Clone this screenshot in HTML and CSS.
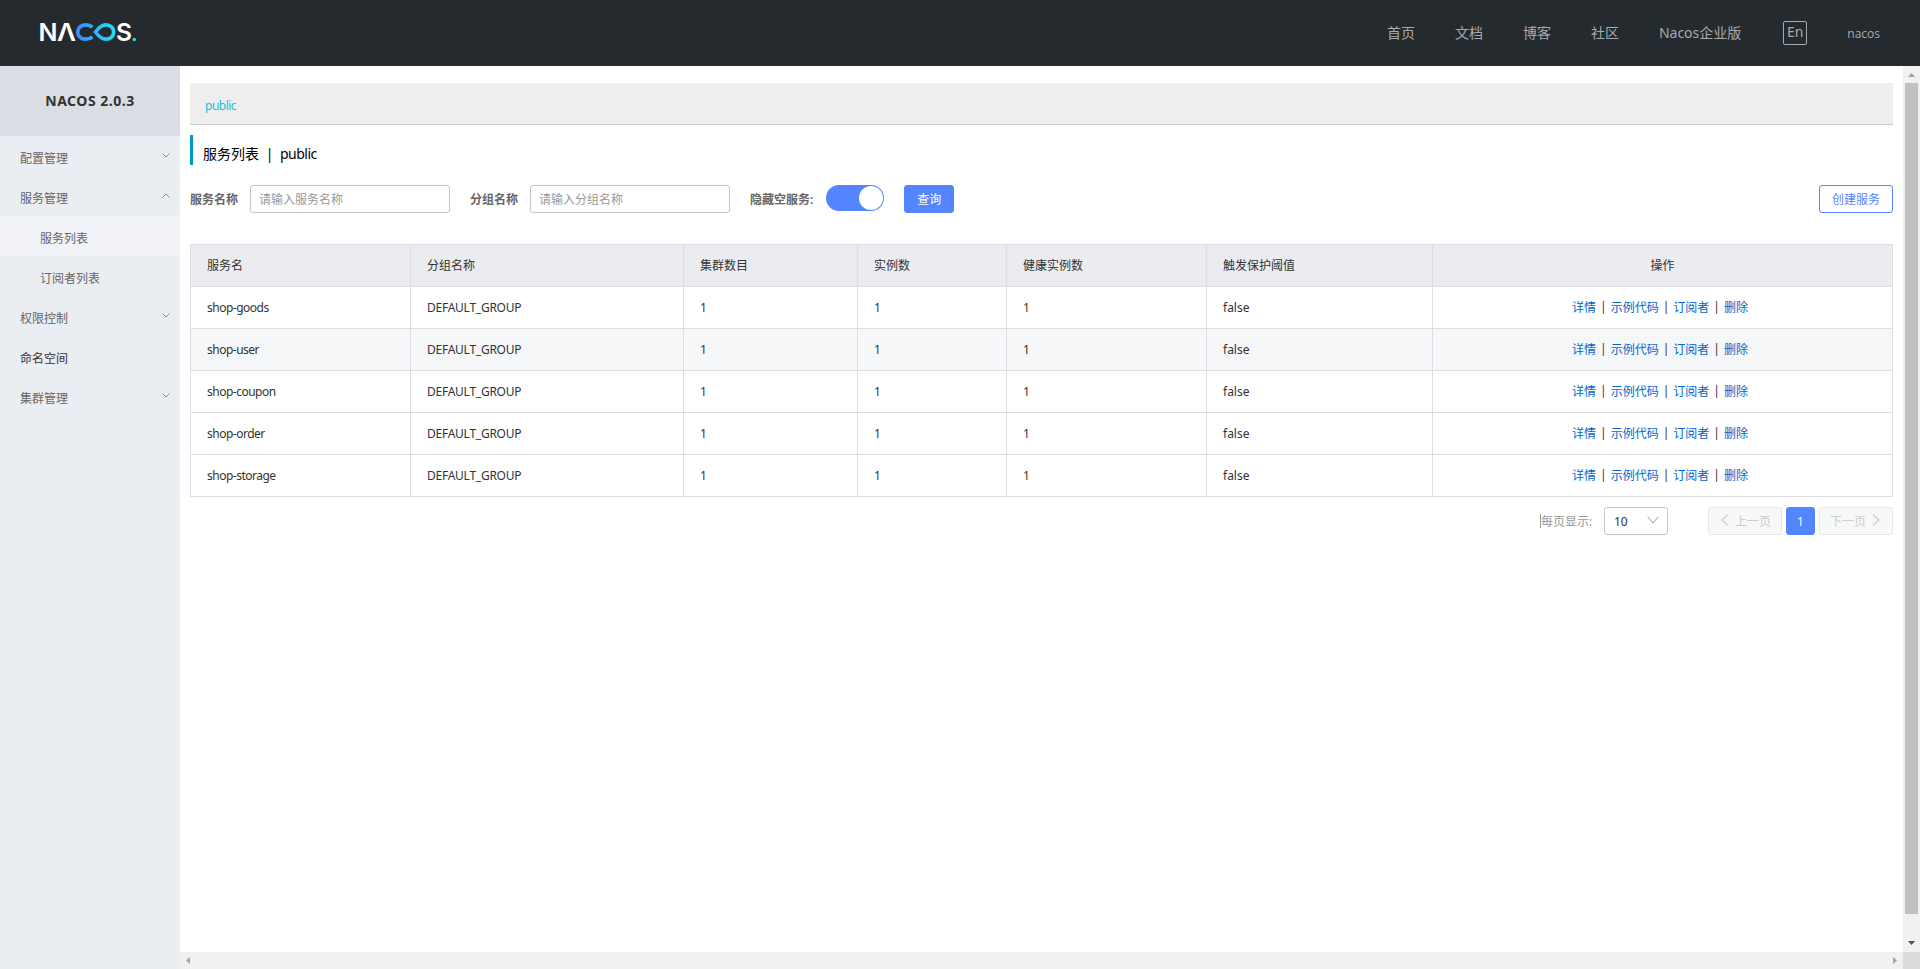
FILE: index.html
```
<!DOCTYPE html>
<html lang="zh-CN">
<head>
  <meta charset="UTF-8">
  <meta name="viewport" content="width=device-width, initial-scale=1.0">
  <title>Nacos</title>
  <link rel="stylesheet" href="styles.css">
</head>
<body>

  <header class="header">
    <a class="logo" href="#">
      <svg width="108" height="44" viewBox="-4 -10 108 44">
        <defs>
          <linearGradient id="loop" gradientUnits="userSpaceOnUse" x1="36" y1="0" x2="76" y2="0">
            <stop offset="0" stop-color="#3f86ff"/>
            <stop offset="1" stop-color="#1be3f5"/>
          </linearGradient>
        </defs>
        <text class="logo-text" x="-1.500" y="21" textLength="19" lengthAdjust="spacingAndGlyphs">N</text>
        <text class="logo-text" x="17" y="21" textLength="19" lengthAdjust="spacingAndGlyphs">Λ</text>
        <path d="M52.500 7.200C50.500 5.500 48.300 4.800 45.500 4.800C41 4.800 37.700 8 37.700 12S41 19.200 45.500 19.200C48.300 19.200 50.500 18.500 52.500 16.800M55.500 12C58 8.500 61.500 4.800 66 4.800C70.500 4.800 73.700 8 73.700 12S70.500 19.200 66 19.200C61.500 19.200 58 15.500 55.500 12Z" fill="none" stroke="url(#loop)" stroke-width="3.700"/>
        <text class="logo-text" x="76" y="21" textLength="16" lengthAdjust="spacingAndGlyphs">S</text>
        <circle cx="94.300" cy="19.500" r="1.700" fill="#1be3f5"/>
      </svg>
    </a>
    <nav class="nav">
      <a href="#">首页</a>
      <a href="#">文档</a>
      <a href="#">博客</a>
      <a href="#">社区</a>
      <a href="#" class="enterprise">Nacos企业版</a>
      <span class="lang">En</span>
      <span class="user">nacos</span>
    </nav>
  </header>

  <div class="layout">
    <aside class="sidebar">
      <h1 class="version">NACOS 2.0.3</h1>
      <ul class="menu">
        <li>配置管理<svg class="arrow" viewBox="0 0 8 5"><path d="M0.500 0.500L4 4L7.500 0.500"/></svg></li>
        <li>服务管理<svg class="arrow" viewBox="0 0 8 5"><path d="M0.500 4.500L4 1L7.500 4.500"/></svg></li>
        <li class="sub active">服务列表</li>
        <li class="sub">订阅者列表</li>
        <li>权限控制<svg class="arrow" viewBox="0 0 8 5"><path d="M0.500 0.500L4 4L7.500 0.500"/></svg></li>
        <li class="single">命名空间</li>
        <li>集群管理<svg class="arrow" viewBox="0 0 8 5"><path d="M0.500 0.500L4 4L7.500 0.500"/></svg></li>
      </ul>
    </aside>

    <main class="main">
      <div class="namespace"><a href="#">public</a></div>
      <h2 class="title"><span>服务列表</span><span class="bar">|</span><span class="ns">public</span></h2>

      <form class="search">
        <label>服务名称</label>
        <input type="text" placeholder="请输入服务名称">
        <label>分组名称</label>
        <input type="text" placeholder="请输入分组名称">
        <label class="hide-empty">隐藏空服务:</label>
        <span class="switch"></span>
        <button type="button" class="btn primary">查询</button>
        <button type="button" class="btn create">创建服务</button>
      </form>

      <table class="services">
        <colgroup>
          <col class="c-name"><col class="c-group"><col class="c-cluster"><col class="c-ip"><col class="c-healthy"><col class="c-flag"><col>
        </colgroup>
        <thead>
          <tr><th>服务名</th><th>分组名称</th><th>集群数目</th><th>实例数</th><th>健康实例数</th><th>触发保护阈值</th><th class="ops">操作</th></tr>
        </thead>
        <tbody>
          <tr><td>shop-goods</td><td>DEFAULT_GROUP</td><td>1</td><td>1</td><td>1</td><td>false</td>
            <td class="ops"><div class="links"><a href="#">详情</a><i>|</i><a href="#">示例代码</a><i>|</i><a href="#">订阅者</a><i>|</i><a href="#">删除</a></div></td></tr>
          <tr class="hovered"><td>shop-user</td><td>DEFAULT_GROUP</td><td>1</td><td>1</td><td>1</td><td>false</td>
            <td class="ops"><div class="links"><a href="#">详情</a><i>|</i><a href="#">示例代码</a><i>|</i><a href="#">订阅者</a><i>|</i><a href="#">删除</a></div></td></tr>
          <tr><td>shop-coupon</td><td>DEFAULT_GROUP</td><td>1</td><td>1</td><td>1</td><td>false</td>
            <td class="ops"><div class="links"><a href="#">详情</a><i>|</i><a href="#">示例代码</a><i>|</i><a href="#">订阅者</a><i>|</i><a href="#">删除</a></div></td></tr>
          <tr><td>shop-order</td><td>DEFAULT_GROUP</td><td>1</td><td>1</td><td>1</td><td>false</td>
            <td class="ops"><div class="links"><a href="#">详情</a><i>|</i><a href="#">示例代码</a><i>|</i><a href="#">订阅者</a><i>|</i><a href="#">删除</a></div></td></tr>
          <tr><td>shop-storage</td><td>DEFAULT_GROUP</td><td>1</td><td>1</td><td>1</td><td>false</td>
            <td class="ops"><div class="links"><a href="#">详情</a><i>|</i><a href="#">示例代码</a><i>|</i><a href="#">订阅者</a><i>|</i><a href="#">删除</a></div></td></tr>
        </tbody>
      </table>

      <div class="pagination">
        <span class="size-label">每页显示:</span>
        <div class="select">10<svg width="12" height="8" viewBox="0 0 12 8"><path d="M0.700 0.700L6 7L11.300 0.700"/></svg></div>
        <button type="button" class="page disabled prev"><svg width="8" height="12" viewBox="0 0 8 12"><path d="M7 0.700L1 6L7 11.300"/></svg>上一页</button>
        <button type="button" class="page current">1</button>
        <button type="button" class="page disabled next">下一页<svg width="8" height="12" viewBox="0 0 8 12"><path d="M1 0.700L7 6L1 11.300"/></svg></button>
      </div>
    </main>

    <div class="scroll-y">
      <svg class="end" viewBox="0 0 17 17"><path d="M5 11L8.500 7L12 11Z" fill="#a3a3a3"/></svg>
      <div class="thumb"></div>
      <svg class="end bottom" viewBox="0 0 17 17"><path d="M5 6L12 6L8.500 10Z" fill="#505050"/></svg>
    </div>
    <div class="scroll-x">
      <svg class="end" viewBox="0 0 17 17"><path d="M10 5L6 8.500L10 12Z" fill="#a3a3a3"/></svg>
      <svg class="end" viewBox="0 0 17 17"><path d="M7 5L11 8.500L7 12Z" fill="#a3a3a3"/></svg>
    </div>
    <div class="corner"></div>
  </div>

</body>
</html>
```
FILE: styles.css
```
* {
  box-sizing: border-box;
}
body {
  margin: 0;
  height: 100vh;
  overflow: hidden;
  display: flex;
  flex-direction: column;
  font-family: "Noto Sans", "Noto Sans CJK SC", sans-serif;
  font-size: 12px;
  color: #333;
  background: #fff;
}
a {
  text-decoration: none;
}
.header {
  height: 66px;
  flex: none;
  display: flex;
  align-items: center;
  justify-content: space-between;
  padding: 0 40px 0 36px;
  background: #252a2f;
}
.logo {
  display: flex;
  margin-top: -2px;
}
.logo-text {
  font-family: Inter, sans-serif;
  font-size: 24.500px;
  font-weight: 600;
  fill: #fff;
}
.nav {
  display: flex;
  align-items: center;
  gap: 40px;
  font-size: 14px;
  color: #a7aaac;
}
.nav a {
  margin-top: -2px;
  color: #a7aaac;
}
.nav .enterprise {
  margin-right: 2px;
}
.lang {
  width: 24px;
  height: 24px;
  line-height: 20px;
  border: 1px solid #a7aaac;
  border-radius: 2px;
  text-align: center;
}
.user {
  font-family: "Open Sans", sans-serif;
  font-size: 12px;
}
.layout {
  flex: 1;
  min-height: 0;
  display: grid;
  grid-template-columns: 180px 1fr 17px;
  grid-template-rows: 1fr 17px;
}
.sidebar {
  grid-row: 1 / 3;
  background: #eaedf1;
}
.version {
  margin: 0;
  height: 70px;
  line-height: 70px;
  text-align: center;
  font-family: "Noto Sans", sans-serif;
  font-size: 14px;
  font-weight: 700;
  letter-spacing: 0.5px;
  background: #d9dde4;
}
.menu {
  margin: 0;
  padding: 0;
  list-style: none;
}
.menu li {
  height: 40px;
  padding: 4px 10px 0 20px;
  display: flex;
  align-items: center;
  justify-content: space-between;
  color: #666;
}
.menu .sub {
  padding-left: 40px;
}
.menu .active {
  background: #f1f3f8;
}
.menu .single {
  color: #333;
}
.arrow {
  width: 8px;
  height: 5px;
  margin-top: -5px;
  fill: none;
  stroke: #888;
}
.main {
  padding: 17px 10px 0;
  min-width: 0;
}
.namespace {
  height: 42px;
  padding-left: 15px;
  line-height: 46px;
  letter-spacing: -0.5px;
  background: #eee;
  border-bottom: 1px solid #ccc;
}
.namespace a {
  color: #1abddc;
}
.title {
  display: flex;
  height: 30px;
  margin: 10px 0 20px;
  padding-left: 10px;
  line-height: 38px;
  border-left: 3px solid #09c;
  font-size: 14px;
  font-weight: 400;
  color: #000;
}
.title .bar {
  width: 21px;
  text-align: center;
}
.title .ns {
  letter-spacing: -0.5px;
}
.search {
  display: flex;
  align-items: center;
  height: 28px;
}
.search label {
  font-weight: 600;
  color: #666;
  margin-right: 12px;
}
.search .hide-empty {
  margin-right: 13px;
}
.search input {
  width: 200px;
  height: 28px;
  margin: 0 20px 0 0;
  padding: 0 8px;
  border: 1px solid #c4c6cf;
  border-radius: 3px;
  font: inherit;
}
.search input::placeholder {
  color: #999;
}
.switch {
  width: 58px;
  height: 26px;
  margin: 0 20px 2px 0;
  padding: 1px;
  border-radius: 13px;
  background: #5584ff;
}
.switch::after {
  content: "";
  display: block;
  width: 24px;
  height: 24px;
  margin-left: auto;
  border-radius: 50%;
  background: #fff;
}
.btn {
  height: 28px;
  padding: 0 12px;
  border: 1px solid #5584ff;
  border-radius: 3px;
  font: inherit;
}
.primary {
  width: 50px;
  background: #5584ff;
  color: #fff;
}
.create {
  width: 74px;
  margin-left: auto;
  background: #fff;
  color: #5584ff;
}
.services {
  width: 1703px;
  margin-top: 31px;
  table-layout: fixed;
  border-collapse: collapse;
}
.services tr {
  height: 42px;
}
.services th,
.services td {
  padding: 0 16px 1px;
  border: 1px solid #dcdee3;
  text-align: left;
  font-weight: 400;
}
.services td:nth-child(1) {
  letter-spacing: -0.5px;
}
.services td:nth-child(2) {
  letter-spacing: -0.25px;
}
.services th {
  background: #ebecf0;
}
.services tbody tr:hover,
.services .hovered {
  background: #f6f7f9;
}
.services .ops {
  text-align: center;
}
.c-name { width: 220px; }
.c-group { width: 273px; }
.c-cluster { width: 174px; }
.c-ip { width: 149px; }
.c-healthy { width: 200px; }
.c-flag { width: 226px; }
.links {
  display: flex;
  justify-content: center;
  padding-right: 5px;
}
.links a {
  color: #06c;
}
.links i {
  width: 14.600px;
  font-style: normal;
  text-align: center;
}
.pagination {
  display: flex;
  justify-content: flex-end;
  align-items: center;
  margin-top: 10px;
}
.size-label {
  height: 14px;
  line-height: 15px;
  margin-right: 10px;
  border-left: 1px solid #999;
  color: #999;
  width: 54px;
  white-space: nowrap;
}
.select {
  display: flex;
  align-items: center;
  justify-content: space-between;
  width: 64px;
  height: 28px;
  margin-right: 40px;
  padding: 0 8px 0 9px;
  border: 1px solid #c4c6cf;
  border-radius: 3px;
}
.select svg {
  margin-top: -2px;
  fill: none;
  stroke: #999;
}
.page {
  display: flex;
  align-items: center;
  justify-content: center;
  gap: 6px;
  height: 28px;
  padding: 0;
  border: 1px solid #e6e7eb;
  border-radius: 3px;
  font: inherit;
}
.page svg {
  margin-top: -2px;
  fill: none;
  stroke: #ccc;
  stroke-width: 1.200;
}
.disabled {
  width: 74px;
  background: #f7f8fa;
  color: #ccc;
}
.prev {
  padding-left: 2px;
}
.next {
  padding-right: 2px;
}
.current {
  width: 29px;
  margin: 0 4px;
  background: #5584ff;
  border-color: #5584ff;
  color: #fff;
}
.scroll-y {
  display: flex;
  flex-direction: column;
  align-items: center;
  background: #f1f1f1;
}
.end {
  width: 17px;
  height: 17px;
  flex: none;
}
.bottom {
  margin-top: auto;
}
.thumb {
  width: 13px;
  height: 831px;
  background: #c1c1c1;
}
.scroll-x {
  display: flex;
  justify-content: space-between;
  background: #f1f1f1;
}
.corner {
  background: #dcdcdc;
}
```
